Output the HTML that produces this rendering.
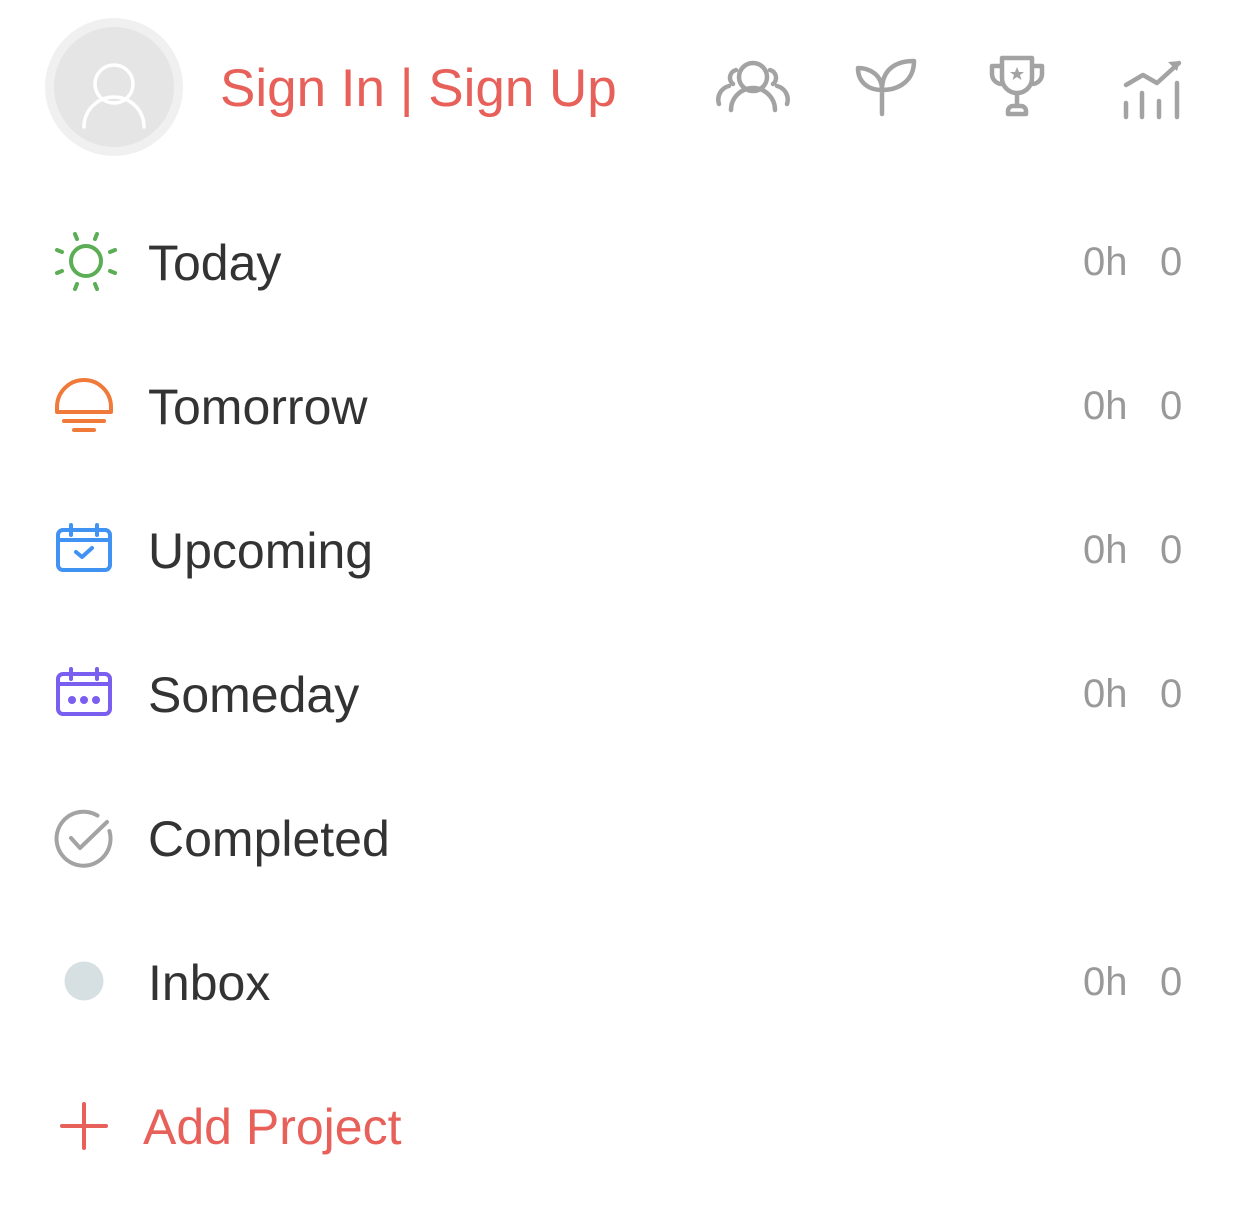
<!DOCTYPE html>
<html><head><meta charset="utf-8"><style>
body{margin:0;width:1239px;height:1225px;background:#fff;position:relative;overflow:hidden;font-family:"Liberation Sans",sans-serif}
.a{position:absolute}
.t{position:absolute;left:148px;font-size:50px;line-height:50px;color:#333;white-space:nowrap}
.c{position:absolute;font-size:40px;line-height:40px;color:#999;white-space:nowrap}
svg{position:absolute;overflow:visible}
</style></head><body>
<div class="a" style="left:45px;top:18px;width:138px;height:138px;border-radius:50%;background:#f0f0f0"></div>
<div class="a" style="left:54px;top:27px;width:120px;height:120px;border-radius:50%;background:#e5e5e5"></div>
<svg style="left:0;top:0" width="1239" height="200" fill="none" stroke-linecap="round" stroke-linejoin="round">
<g stroke="#fff" stroke-width="3.5"><circle cx="114" cy="84" r="19"/><path d="M84 127a30 30 0 0 1 60 0"/></g>
<g stroke="#a3a3a3" stroke-width="4.5">
<circle cx="753" cy="77" r="14"/><path d="M731 110a22 22 0 0 1 44 0"/><path d="M736 70a8 8 0 0 0 -3 14M770 70a8 8 0 0 1 3 14M719 104a14 14 0 0 1 10 -18M787 104a14 14 0 0 0 -10 -18"/>
<path d="M882 114V90M882 90C882 75 870 68 858 68C858 82 868 90 882 90ZM882 90C882 70 895 61 914 61C914 80 900 90 882 90Z"/>
<path d="M1002 58h30v20a15 15 0 0 1 -30 0ZM1002 66h-10v8a10 10 0 0 0 10 10M1032 66h10v8a10 10 0 0 1 -10 10M1017 93v12M1008 114v-3a5 5 0 0 1 5 -5h8a5 5 0 0 1 5 5v3Z"/>
<path d="M1126 117v-14M1142 117v-24M1159 117v-16M1177 117v-34M1126 85l17 -10 14 8 22 -20"/>
</g>
<path d="M1017 67l2 5h5l-4 3 1.5 5-4.5-3-4.5 3 1.5-5-4-3h5z" fill="#a3a3a3"/>
<path d="M1180 61l-12 1 9 9z" fill="#a3a3a3"/>
</svg>
<div class="a" style="left:220px;top:62px;font-size:53px;line-height:54px;color:#e8605a;white-space:nowrap">Sign In | Sign Up</div>

<svg style="left:0;top:0" width="200" height="1225" fill="none" stroke-linecap="round" stroke-linejoin="round">
<g stroke="#5bae55" stroke-width="4"><circle cx="86" cy="261" r="15"/><path d="M75 234l2 5M97 234l-2 5M57 250l5 2M115 250l-5 2M57 273l5-2M115 273l-5-2M75 289l2-5M97 289l-2-5"/></g>
<g stroke="#ef7a39" stroke-width="4"><path d="M57 412v-5a27 27 0 0 1 54 0v5Z"/><path d="M64 421h40M74 430h20"/></g>
<g stroke="#4092f3" stroke-width="4"><rect x="58" y="530" width="52" height="40" rx="5"/><path d="M58 540h52M71 525v10M97 525v10M76 552l6 5 10-9"/></g>
<g stroke="#7a5ef0" stroke-width="4"><rect x="58" y="674" width="52" height="40" rx="5"/><path d="M58 684h52M71 669v10M97 669v10"/></g>
<g fill="#7a5ef0"><circle cx="72" cy="700" r="4"/><circle cx="84" cy="700" r="4"/><circle cx="96" cy="700" r="4"/></g>
<g stroke="#a3a3a3" stroke-width="4"><path d="M109.4 831.0A27 27 0 1 1 97.5 815.6"/><path d="M71 838l9 10 27 -26"/></g>
<circle cx="84" cy="981" r="19.5" fill="#d6dfe2"/>
<g stroke="#e8605a" stroke-width="4"><path d="M84 1104v44M62 1126h44"/></g>
</svg>

<div class="t" style="top:238px">Today</div>
<div class="t" style="top:382px">Tomorrow</div>
<div class="t" style="top:526px">Upcoming</div>
<div class="t" style="top:670px">Someday</div>
<div class="t" style="top:814px">Completed</div>
<div class="t" style="top:958px">Inbox</div>
<div class="t" style="top:1102px;left:143px;color:#e8605a">Add Project</div>

<div class="c" style="left:1083px;top:242px">0h</div><div class="c" style="left:1160px;top:242px">0</div>
<div class="c" style="left:1083px;top:386px">0h</div><div class="c" style="left:1160px;top:386px">0</div>
<div class="c" style="left:1083px;top:530px">0h</div><div class="c" style="left:1160px;top:530px">0</div>
<div class="c" style="left:1083px;top:674px">0h</div><div class="c" style="left:1160px;top:674px">0</div>
<div class="c" style="left:1083px;top:962px">0h</div><div class="c" style="left:1160px;top:962px">0</div>
</body></html>
